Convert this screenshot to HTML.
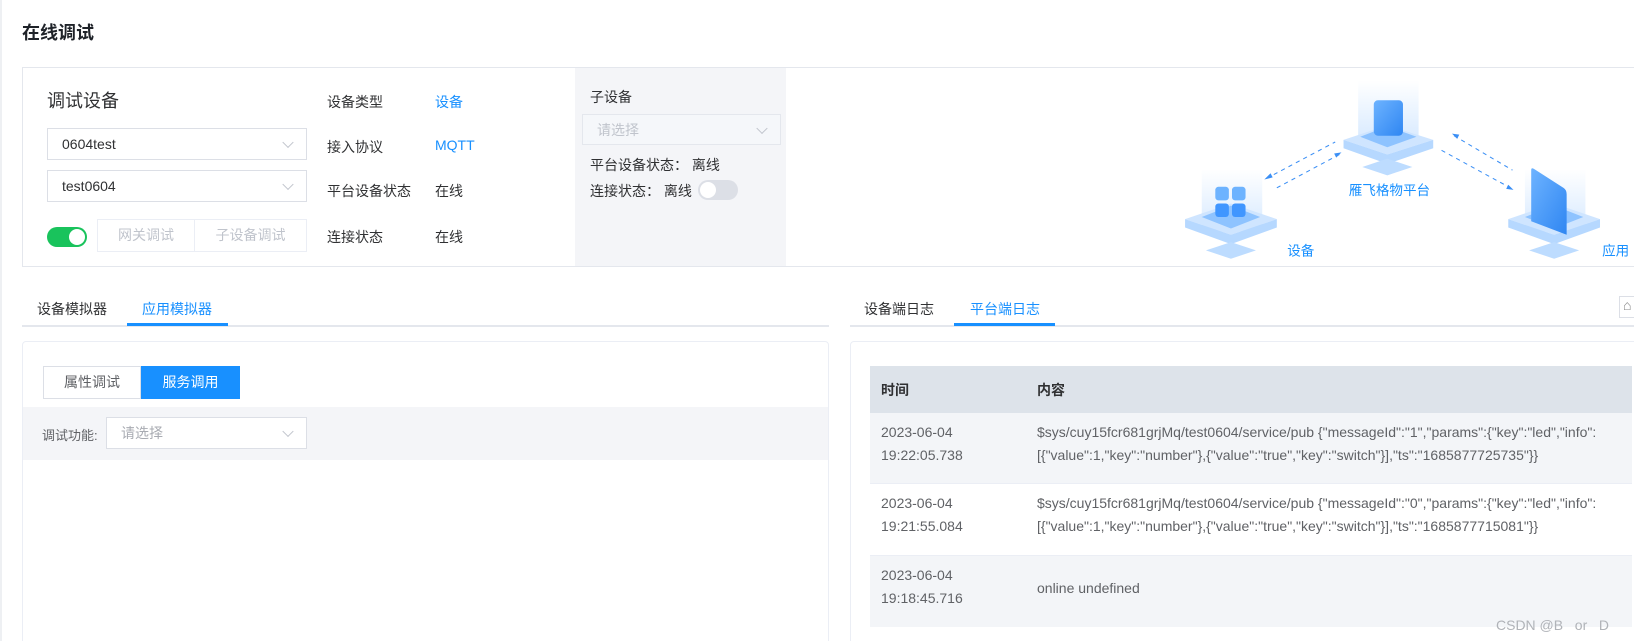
<!DOCTYPE html>
<html><head><meta charset="utf-8"><style>
*{box-sizing:border-box;margin:0;padding:0}
html,body{width:1634px;height:641px;overflow:hidden}
body{background:#fff;font-family:"Liberation Sans","Noto Sans CJK SC",sans-serif;color:#303133;position:relative;font-size:14px}
.a{position:absolute;white-space:nowrap}
.sel{position:absolute;border:1px solid #dcdfe6;background:#fff;font-size:14px;color:#303133;padding-left:14px;display:flex;align-items:center}
.sel:after{content:"";position:absolute;right:14px;top:50%;width:7px;height:7px;border-right:1px solid #c0c4cc;border-bottom:1px solid #c0c4cc;transform:translateY(-70%) rotate(45deg)}
.blue{color:#1890ff}
</style></head><body>
<div class="a" style="left:0;top:0;width:2px;height:641px;background:#eef0f3"></div>
<div class="a" style="left:22px;top:19px;font-size:18px;font-weight:bold;color:#1f2329">在线调试</div>

<div class="a" style="left:22px;top:67px;width:1640px;height:200px;border:1px solid #e4e7ed"></div>
<div class="a" style="left:47px;top:87px;font-size:18px">调试设备</div>
<div class="sel" style="left:47px;top:128px;width:260px;height:32px">0604test</div>
<div class="sel" style="left:47px;top:170px;width:260px;height:32px">test0604</div>
<div class="a" style="left:47px;top:227px;width:40px;height:20px;border-radius:10px;background:#19c35c"><div style="position:absolute;right:2px;top:2px;width:16px;height:16px;border-radius:50%;background:#fff"></div></div>
<div class="a" style="left:97px;top:219px;width:210px;height:33px;border:1px solid #ebeef5;display:flex;color:#c0c4cc"><div style="width:97px;border-right:1px solid #ebeef5;text-align:center;line-height:31px">网关调试</div><div style="flex:1;text-align:center;line-height:31px">子设备调试</div></div>
<div class="a" style="left:327px;top:92px">设备类型</div><div class="a blue" style="left:435px;top:92px">设备</div>
<div class="a" style="left:327px;top:137px">接入协议</div><div class="a blue" style="left:435px;top:137px">MQTT</div>
<div class="a" style="left:327px;top:181px">平台设备状态</div><div class="a" style="left:435px;top:181px">在线</div>
<div class="a" style="left:327px;top:227px">连接状态</div><div class="a" style="left:435px;top:227px">在线</div>

<div class="a" style="left:575px;top:68px;width:211px;height:198px;background:#f4f5f8"></div>
<div class="a" style="left:590px;top:87px">子设备</div>
<div class="sel" style="left:582px;top:114px;width:199px;height:31px;color:#c0c4cc;background:#f5f7fa;border-color:#e4e7ed">请选择</div>
<div class="a" style="left:590px;top:155px">平台设备状态：&nbsp;离线</div>
<div class="a" style="left:590px;top:181px">连接状态：&nbsp;离线</div>
<div class="a" style="left:698px;top:180px;width:40px;height:20px;border-radius:10px;background:#dcdfe6"><div style="position:absolute;left:2px;top:2px;width:16px;height:16px;border-radius:50%;background:#fff"></div></div>

<svg class="a" style="left:1149px;top:69px" width="485" height="196" viewBox="1100 66 464 188">
<defs><linearGradient id="g" x1="0" y1="0" x2="0" y2="1"><stop offset="0" stop-color="#fff"/><stop offset="1" stop-color="#d6e9ff"/></linearGradient>
<linearGradient id="b" x1="0" y1="0" x2="1" y2="1"><stop offset="0" stop-color="#6db3ff"/><stop offset="1" stop-color="#2f86f2"/></linearGradient></defs>
<rect x="1300" y="77" width="58" height="60" fill="url(#g)"/>
<path d="M1286 134 L1328 120 L1372 134 L1328 148Z" fill="#cfe5ff"/><path d="M1286 134 L1286 142 L1328 157 L1372 142 L1372 134 L1328 148Z" fill="#b6d8ff"/>
<path d="M1304 160 L1328 152 L1352 160 L1328 168Z" fill="#bddcff"/>
<path d="M1302 131 L1328 121 L1356 131 L1328 141Z" fill="#8ec3ff"/>
<rect x="1315" y="96" width="28" height="34" rx="4" fill="url(#b)"/>
<text x="1330" y="187" font-size="13" fill="#1890ff" text-anchor="middle" font-family="Liberation Sans,Noto Sans CJK SC,sans-serif">雁飞格物平台</text>
<rect x="1150" y="162" width="58" height="60" fill="url(#g)"/>
<path d="M1134 210 L1178 195 L1222 210 L1178 225Z" fill="#cfe5ff"/><path d="M1134 210 L1134 218 L1178 234 L1222 218 L1222 210 L1178 225Z" fill="#b6d8ff"/>
<path d="M1154 240 L1178 232 L1202 240 L1178 248Z" fill="#bddcff"/>
<path d="M1150 208 L1178 197 L1206 208 L1178 219Z" fill="#8ec3ff"/>
<rect x="1163" y="179" width="13" height="13" rx="3" fill="#6db3ff"/><rect x="1179" y="179" width="13" height="13" rx="3" fill="#6db3ff"/><rect x="1163" y="195" width="13" height="13" rx="3" fill="#4096ff"/><rect x="1179" y="195" width="13" height="13" rx="3" fill="#4096ff"/>
<text x="1232" y="245" font-size="13" fill="#1890ff" font-family="Liberation Sans,Noto Sans CJK SC,sans-serif">设备</text>
<rect x="1460" y="162" width="58" height="60" fill="url(#g)"/>
<path d="M1444 210 L1488 195 L1532 210 L1488 225Z" fill="#cfe5ff"/><path d="M1444 210 L1444 218 L1488 234 L1532 218 L1532 210 L1488 225Z" fill="#b6d8ff"/>
<path d="M1464 240 L1488 232 L1512 240 L1488 248Z" fill="#bddcff"/>
<path d="M1460 208 L1488 197 L1516 208 L1488 219Z" fill="#8ec3ff"/>
<path d="M1466 163 Q1466 160 1469 162 L1497 180 Q1500 182 1500 186 L1500 225 L1466 212Z" fill="url(#b)"/>
<text x="1534" y="245" font-size="13" fill="#1890ff" font-family="Liberation Sans,Noto Sans CJK SC,sans-serif">应用</text>
<line x1="1212" y1="171" x2="1278" y2="136" stroke="#3b8ff5" stroke-dasharray="4 4"/><path d="M1210 172 l6 -6 l2 4z" fill="#3b8ff5"/>
<line x1="1222" y1="180" x2="1282" y2="148" stroke="#3b8ff5" stroke-dasharray="4 4"/><path d="M1284 146 l-7 1 l2 4z" fill="#3b8ff5"/>
<line x1="1392" y1="130" x2="1448" y2="163" stroke="#3b8ff5" stroke-dasharray="4 4"/><path d="M1390 128 l7 1 l-2 4z" fill="#3b8ff5"/>
<line x1="1380" y1="144" x2="1446" y2="180" stroke="#3b8ff5" stroke-dasharray="4 4"/><path d="M1449 182 l-7 -1 l2 -4z" fill="#3b8ff5"/>
</svg>

<div class="a" style="left:37px;top:299px">设备模拟器</div>
<div class="a blue" style="left:142px;top:299px">应用模拟器</div>
<div class="a" style="left:22px;top:325px;width:807px;height:2px;background:#e4e7ed"></div>
<div class="a" style="left:127px;top:323px;width:101px;height:3px;background:#1890ff"></div>
<div class="a" style="left:22px;top:341px;width:807px;height:310px;border:1px solid #ebeef5;border-radius:4px"></div>
<div class="a" style="left:43px;top:366px;width:197px;height:33px;display:flex;font-size:14px"><div style="width:98px;border:1px solid #dcdfe6;text-align:center;line-height:31px;color:#606266">属性调试</div><div style="flex:1;background:#1890ff;color:#fff;text-align:center;line-height:33px">服务调用</div></div>
<div class="a" style="left:23px;top:407px;width:805px;height:53px;background:#f4f5f8"></div>
<div class="a" style="left:42px;top:425px;font-size:13px;color:#606266">调试功能:</div>
<div class="sel" style="left:106px;top:417px;width:201px;height:32px;color:#a8abb2">请选择</div>

<div class="a" style="left:864px;top:299px">设备端日志</div>
<div class="a blue" style="left:970px;top:299px">平台端日志</div>
<div class="a" style="left:850px;top:325px;width:790px;height:2px;background:#e4e7ed"></div>
<div class="a" style="left:954px;top:323px;width:101px;height:3px;background:#1890ff"></div>
<div class="a" style="left:1619px;top:296px;width:20px;height:22px;border:1px solid #dcdfe6;font-size:14px;color:#888;padding-left:3px">&#x2302;</div>
<div class="a" style="left:850px;top:341px;width:790px;height:310px;border:1px solid #ebeef5;border-radius:4px"></div>
<div class="a" style="left:870px;top:366px;width:762px;height:47px;background:#dde3ea"></div>
<div class="a" style="left:881px;top:380px;font-weight:bold;font-size:14px">时间</div>
<div class="a" style="left:1037px;top:380px;font-weight:bold;font-size:14px">内容</div>
<div class="a" style="left:870px;top:413px;width:762px;height:71px;background:#f3f5f8;border-bottom:1px solid #ebeef5"></div>
<div class="a" style="left:870px;top:555px;width:762px;height:72px;background:#f3f5f8;border-top:1px solid #ebeef5"></div>
<div class="a" style="left:881px;top:421px;line-height:23px;color:#606266">2023-06-04<br>19:22:05.738</div>
<div class="a" style="left:1037px;top:421px;line-height:23px;color:#606266">$sys/cuy15fcr681grjMq/test0604/service/pub {"messageId":"1","params":{"key":"led","info":<br>[{"value":1,"key":"number"},{"value":"true","key":"switch"}],"ts":"1685877725735"}}</div>
<div class="a" style="left:881px;top:492px;line-height:23px;color:#606266">2023-06-04<br>19:21:55.084</div>
<div class="a" style="left:1037px;top:492px;line-height:23px;color:#606266">$sys/cuy15fcr681grjMq/test0604/service/pub {"messageId":"0","params":{"key":"led","info":<br>[{"value":1,"key":"number"},{"value":"true","key":"switch"}],"ts":"1685877715081"}}</div>
<div class="a" style="left:881px;top:564px;line-height:23px;color:#606266">2023-06-04<br>19:18:45.716</div>
<div class="a" style="left:1037px;top:580px;color:#606266">online undefined</div>
<div class="a" style="left:1496px;top:617px;font-size:14px;color:#b0b3b8">CSDN @B&nbsp;&nbsp;&nbsp;or&nbsp;&nbsp;&nbsp;D</div>
</body></html>
